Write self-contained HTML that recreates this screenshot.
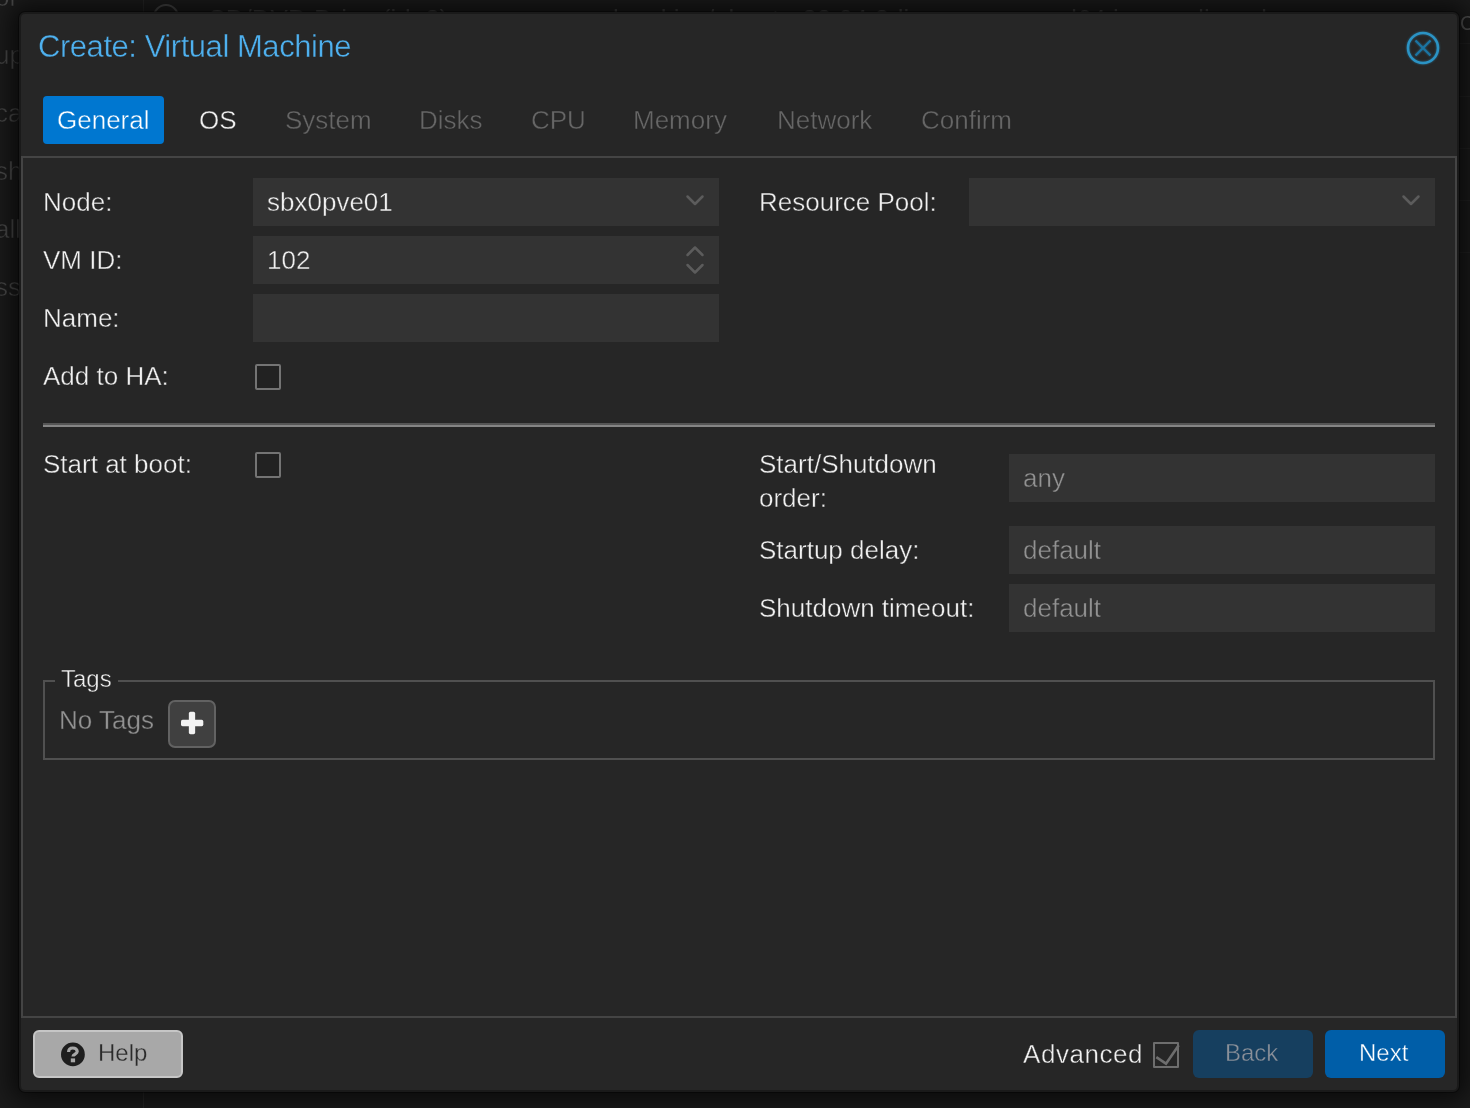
<!DOCTYPE html>
<html><head><meta charset="utf-8">
<style>
*{margin:0;padding:0;box-sizing:border-box}
html,body{width:1470px;height:1108px;overflow:hidden}
body{background:#131313;font-family:"Liberation Sans",sans-serif;position:relative}
.a{position:absolute;white-space:nowrap;line-height:1;will-change:transform}
.bgt{color:#4a4a4a;font-size:26px;-webkit-text-stroke:0.4px #1b1b1b}
#dlg{position:absolute;left:19px;top:12px;width:1440px;height:1080px;background:#262626;border:2px solid #1a1a1a;border-radius:6px;box-shadow:0 0 0 1px rgba(0,0,0,.4),0 0 24px 8px rgba(0,0,0,.65)}
.lbl{color:#f0f0f0;font-size:26px;-webkit-text-stroke:0.4px #262626}
.fld{position:absolute;background:#333333}
.ft{color:#f0f0f0;font-size:26px;-webkit-text-stroke:0.4px #333}
.ph{color:#929292;font-size:26px;-webkit-text-stroke:0.4px #333}
.tab{color:#666;font-size:26px;-webkit-text-stroke:0.4px #262626}
.cb{position:absolute;width:26px;height:26px;border:2px solid #747474;background:#222;border-radius:2px}
</style></head><body>
<!-- background page -->
<div class="a" style="left:0;top:0;width:1470px;height:1108px;background:#1b1b1b"></div>
<div class="a" style="left:143px;top:0;width:1px;height:1108px;background:#262626"></div>
<div class="a bgt" style="left:-5px;top:-16px">or</div>
<div class="a bgt" style="left:-5px;top:42px">up</div>
<div class="a bgt" style="left:-5px;top:100px">ca</div>
<div class="a bgt" style="left:-5px;top:158px">sh</div>
<div class="a bgt" style="left:-5px;top:216px">all</div>
<div class="a bgt" style="left:-5px;top:274px">ss</div>
<svg class="a" style="left:150px;top:2px" width="32" height="32" viewBox="0 0 32 32"><circle cx="16" cy="15" r="12" fill="none" stroke="#444" stroke-width="2"/></svg>
<div class="a" style="left:207px;top:6px;font-size:26px;color:#3c3c3c">CD/DVD Drive (ide2)</div>
<div class="a" style="left:613px;top:6px;font-size:26px;color:#3c3c3c">local:iso/ubuntu-22.04.3-live-server-amd64.iso,media=cdrom</div>
<div class="a" style="left:1459px;top:43px;width:11px;height:1px;background:#222"></div>
<div class="a" style="left:1459px;top:96px;width:11px;height:1px;background:#222"></div>
<div class="a" style="left:1459px;top:148px;width:11px;height:1px;background:#222"></div>
<div class="a" style="left:1459px;top:200px;width:11px;height:1px;background:#222"></div>
<div class="a" style="left:1459px;top:252px;width:11px;height:1px;background:#222"></div>
<div class="a" style="left:1460px;top:13px;font-size:20px;color:#555">C</div>

<div id="dlg"></div>

<!-- title -->
<div class="a" style="left:38px;top:31px;font-size:31px;letter-spacing:-0.45px;color:#4eb0ee;-webkit-text-stroke:0.4px #262626">Create: Virtual Machine</div>
<svg class="a" style="left:1405px;top:30px;filter:drop-shadow(0 0 1px rgba(43,147,196,.6))" width="36" height="36" viewBox="0 0 36 36">
 <circle cx="18" cy="18" r="15" fill="none" stroke="#2b93c4" stroke-width="2.6"/>
 <path d="M10.5 10.5L25.5 25.5M25.5 10.5L10.5 25.5" stroke="#1b75a3" stroke-width="2.2"/>
</svg>

<!-- tabs -->
<div class="a" style="left:43px;top:96px;width:121px;height:48px;background:#0077d0;border-radius:4px"></div>
<div class="a" style="left:57px;top:107px;font-size:26px;color:#fff;-webkit-text-stroke:0.4px #0077d0">General</div>
<div class="a" style="left:199px;top:107px;font-size:26px;color:#f0f0f0;-webkit-text-stroke:0.4px #262626">OS</div>
<div class="a tab" style="left:285px;top:107px">System</div>
<div class="a tab" style="left:419px;top:107px">Disks</div>
<div class="a tab" style="left:531px;top:107px">CPU</div>
<div class="a tab" style="left:633px;top:107px">Memory</div>
<div class="a tab" style="left:777px;top:107px">Network</div>
<div class="a tab" style="left:921px;top:107px">Confirm</div>

<!-- panel -->
<div class="a" style="left:21px;top:156px;width:1436px;height:862px;border:2px solid #444"></div>


<!-- form: left column -->
<div class="a lbl" style="left:43px;top:189px">Node:</div>
<div class="fld" style="left:253px;top:178px;width:466px;height:48px"></div>
<div class="a ft" style="left:267px;top:189px">sbx0pve01</div>
<svg class="a" style="left:685px;top:193px" width="20" height="16" viewBox="0 0 20 16"><path d="M2.5 3.5L10 11L17.5 3.5" fill="none" stroke="#5c5c5c" stroke-width="2.5" stroke-linecap="round" stroke-linejoin="round"/></svg>

<div class="a lbl" style="left:43px;top:247px">VM ID:</div>
<div class="fld" style="left:253px;top:236px;width:466px;height:48px"></div>
<div class="a ft" style="left:267px;top:247px">102</div>
<svg class="a" style="left:685px;top:243px" width="20" height="34" viewBox="0 0 20 34"><path d="M2.5 12L10 4.5L17.5 12M2.5 22L10 29.5L17.5 22" fill="none" stroke="#5c5c5c" stroke-width="2.5" stroke-linecap="round" stroke-linejoin="round"/></svg>

<div class="a lbl" style="left:43px;top:305px">Name:</div>
<div class="fld" style="left:253px;top:294px;width:466px;height:48px"></div>

<div class="a lbl" style="left:43px;top:363px">Add to HA:</div>
<div class="cb" style="left:255px;top:364px"></div>

<!-- right column -->
<div class="a lbl" style="left:759px;top:189px">Resource Pool:</div>
<div class="fld" style="left:969px;top:178px;width:466px;height:48px"></div>
<svg class="a" style="left:1401px;top:193px" width="20" height="16" viewBox="0 0 20 16"><path d="M2.5 3.5L10 11L17.5 3.5" fill="none" stroke="#5c5c5c" stroke-width="2.5" stroke-linecap="round" stroke-linejoin="round"/></svg>

<!-- divider -->
<div class="a" style="left:43px;top:423px;width:1392px;height:4px;border-top:2px solid #555;background:#858585"></div>

<div class="a lbl" style="left:43px;top:451px">Start at boot:</div>
<div class="cb" style="left:255px;top:452px"></div>

<div class="a lbl" style="left:759px;top:451px">Start/Shutdown</div>
<div class="a lbl" style="left:759px;top:485px">order:</div>
<div class="fld" style="left:1009px;top:454px;width:426px;height:48px"></div>
<div class="a ph" style="left:1023px;top:465px">any</div>

<div class="a lbl" style="left:759px;top:537px">Startup delay:</div>
<div class="fld" style="left:1009px;top:526px;width:426px;height:48px"></div>
<div class="a ph" style="left:1023px;top:537px">default</div>

<div class="a lbl" style="left:759px;top:595px">Shutdown timeout:</div>
<div class="fld" style="left:1009px;top:584px;width:426px;height:48px"></div>
<div class="a ph" style="left:1023px;top:595px">default</div>

<!-- tags fieldset -->
<div class="a" style="left:43px;top:680px;width:1392px;height:80px;border:2px solid #505050"></div>
<div class="a" style="left:55px;top:670px;width:63px;height:20px;background:#262626"></div>
<div class="a" style="left:61px;top:667px;font-size:24px;color:#f0f0f0;-webkit-text-stroke:0.4px #262626">Tags</div>
<div class="a ph" style="left:59px;top:707px">No Tags</div>
<div class="a" style="left:168px;top:700px;width:48px;height:48px;background:#404040;border:2px solid #626262;border-radius:7px"></div>
<svg class="a" style="left:168px;top:700px" width="48" height="48" viewBox="0 0 48 48"><rect x="13" y="19.85" width="22.3" height="6.3" rx="1.6" fill="#f2f2f2"/><rect x="20.85" y="11.85" width="6.3" height="22.3" rx="1.6" fill="#f2f2f2"/></svg>

<!-- footer -->
<div class="a" style="left:33px;top:1030px;width:150px;height:48px;background:#a8a8a8;border:2px solid #c6c6c6;border-radius:6px"></div>
<svg class="a" style="left:60px;top:1041px" width="26" height="26" viewBox="0 0 26 26"><circle cx="12.9" cy="13.4" r="11.9" fill="#1e1e1e"/><path d="M8.6 11 C8.6 8.3 10.5 7 12.9 7 C15.4 7 17.2 8.5 17.2 10.6 C17.2 13 13 13.1 13 15.6" fill="none" stroke="#a8a8a8" stroke-width="3.2"/><rect x="10.8" y="17.4" width="4.3" height="3.9" fill="#a8a8a8"/></svg>
<div class="a" style="left:98px;top:1041px;font-size:24px;color:#2a2a2a;-webkit-text-stroke:0.3px #aaa">Help</div>

<div class="a lbl" style="left:1023px;top:1041px;letter-spacing:0.55px">Advanced</div>
<div class="cb" style="left:1153px;top:1042px;width:26px;height:26px;background:#262626;border-color:#6e6e6e;border-radius:1px"></div>
<svg class="a" style="left:1150px;top:1040px" width="34" height="30" viewBox="0 0 34 30"><path d="M6.3 17.2L16 23.7L28.7 5.2" fill="none" stroke="#6e6e6e" stroke-width="2.6"/></svg>
<div class="a" style="left:1193px;top:1030px;width:120px;height:48px;background:#163f5f;border-radius:6px"></div>
<div class="a" style="left:1225px;top:1041px;font-size:24px;color:#8a9099;-webkit-text-stroke:0.4px #163f5f">Back</div>
<div class="a" style="left:1325px;top:1030px;width:120px;height:48px;background:#005ea8;border-radius:6px"></div>
<div class="a" style="left:1359px;top:1041px;font-size:24px;color:#fff;-webkit-text-stroke:0.4px #005ea8">Next</div>
</body></html>
